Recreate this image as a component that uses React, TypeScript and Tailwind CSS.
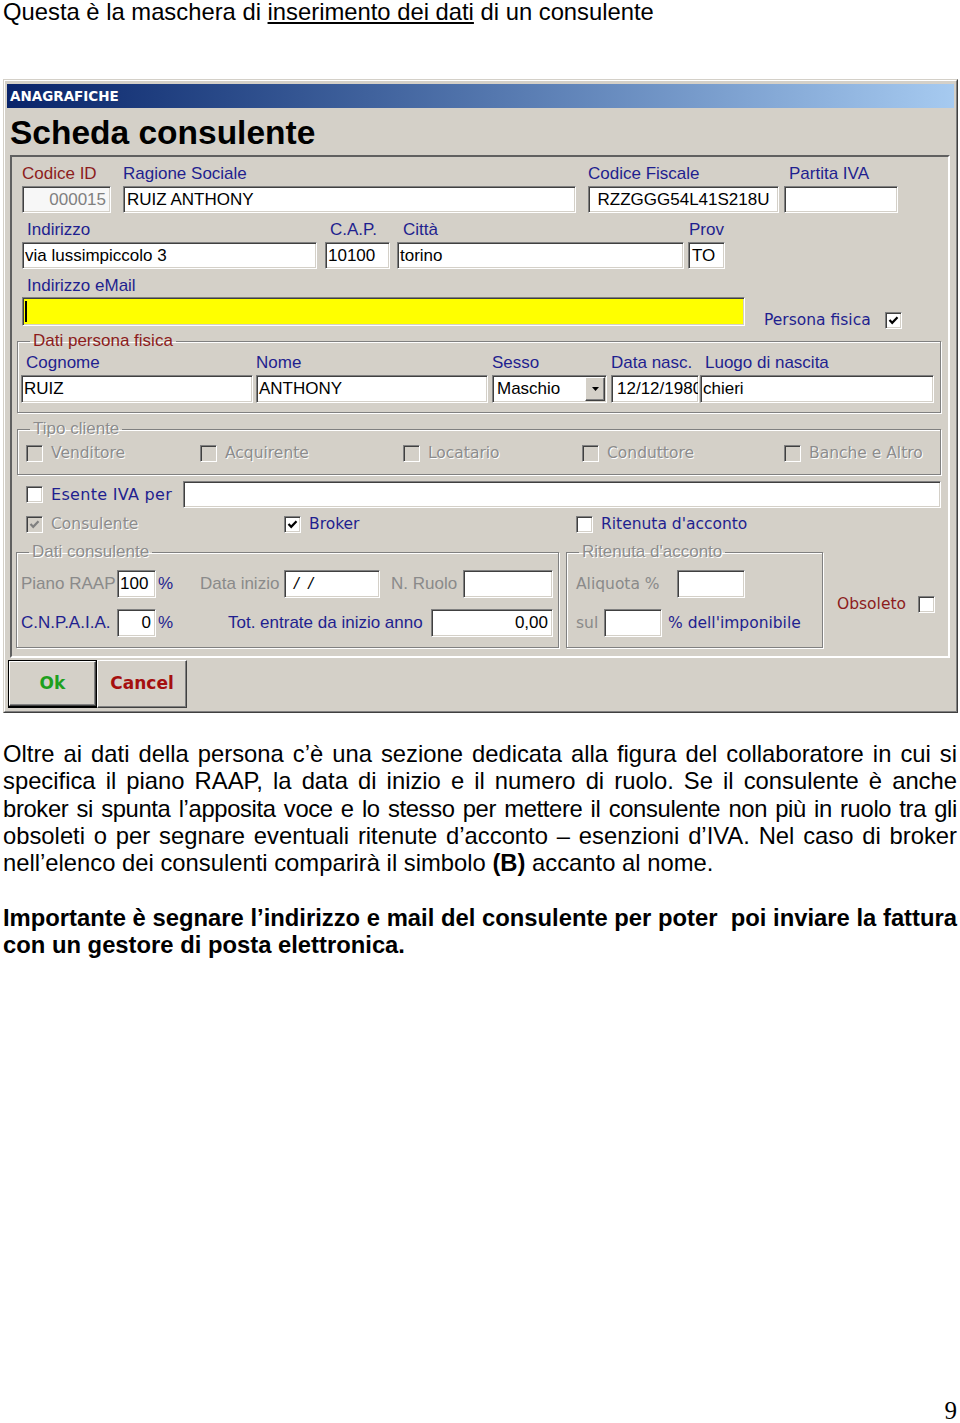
import React from 'react'

const ARIAL = "font-['Liberation_Sans',Arial,sans-serif]"
const TAHOMA = "font-['DejaVu_Sans',Verdana,sans-serif]"
const SUNKEN =
  'border border-t-[#808080] border-l-[#808080] border-r-white border-b-white shadow-[inset_1px_1px_0_#404040,inset_-1px_-1px_0_#d4d0c8]'
const RAISED =
  'border border-t-white border-l-white border-r-[#404040] border-b-[#404040] shadow-[inset_-1px_-1px_0_#808080]'
const LBL = `${ARIAL} text-[17px] leading-[20px] whitespace-nowrap`
const TLBL = `${TAHOMA} text-[15.5px] leading-[17px] whitespace-nowrap`
const NAVY = 'text-[#1f1f8f]'
const RED = 'text-[#8c1c1c]'
const GRAY = 'text-[#8a8a8a]'
const DIS = 'text-[#8c8c8c] [text-shadow:1px_1px_0_#ffffff]'

type Kids = { className?: string; children?: React.ReactNode }

// sunken edit box
function Field({ className = '', children }: Kids) {
  return (
    <div
      className={`${SUNKEN} ${ARIAL} flex items-center overflow-hidden whitespace-nowrap text-[17px] text-black ${className}`}
    >
      {children}
    </div>
  )
}

function Check({ checked = false, disabled = false }: { checked?: boolean; disabled?: boolean }) {
  return (
    <div
      className={`${SUNKEN} w-[17px] h-[17px] shrink-0 flex items-center justify-center ${
        disabled ? 'bg-[#d4d0c8]' : 'bg-white'
      }`}
    >
      {checked && (
        <svg viewBox="0 0 11 11" className="w-[11px] h-[11px]">
          <path
            d="M1.5 5 L4.2 7.8 L9.5 2.2"
            fill="none"
            stroke={disabled ? '#808080' : '#000000'}
            strokeWidth="2.2"
          />
        </svg>
      )}
    </div>
  )
}

function Col({ label, labelCls = '', className = '', children }: Kids & { label: string; labelCls?: string }) {
  return (
    <div className={`flex flex-col ${className}`}>
      <span className={`${LBL} ${labelCls}`}>{label}</span>
      {children}
    </div>
  )
}

function Group({ title, titleCls = '', className = '', children }: Kids & { title: string; titleCls?: string }) {
  return (
    <fieldset className={`border border-[#808080] shadow-[inset_1px_1px_0_#ffffff,1px_1px_0_#ffffff] ${className}`}>
      <legend className={`ml-[12px] px-[3px] ${LBL} ${titleCls}`}>{title}</legend>
      {children}
    </fieldset>
  )
}

function Opt({ label, className = '', checked, disabled, labelCls }: {
  label: string
  className?: string
  checked?: boolean
  disabled?: boolean
  labelCls: string
}) {
  return (
    <div className={`flex items-center gap-[8px] ${className}`}>
      <Check checked={checked} disabled={disabled} />
      <span className={`${TLBL} ${labelCls}`}>{label}</span>
    </div>
  )
}

export default function App() {
  return (
    <div className={`min-h-[1423px] w-[960px] bg-white flex flex-col text-black ${ARIAL}`}>
      <p className="pl-[3px] text-[23.8px] leading-[24px]">
        Questa è la maschera di <span className="underline">inserimento dei dati</span> di un consulente
      </p>

      {/* window */}
      <div className="mt-[55px] ml-[3px] w-[955px] border border-t-[#d4d0c8] border-l-[#d4d0c8] border-r-[#404040] border-b-[#404040]">
        <div className="border border-t-white border-l-white border-r-[#808080] border-b-[#808080] bg-[#d4d0c8] pt-[3px] px-[2px] pb-[3px]">
          <div className="h-[24px] flex items-center pl-[3px] bg-linear-to-r from-[#0a246a] to-[#a6caf0]">
            <span className={`${TAHOMA} text-[13.5px] font-bold text-white`}>ANAGRAFICHE</span>
          </div>

          <h1 className="mt-[9px] ml-[3px] text-[33.5px] leading-[32px] font-bold">Scheda consulente</h1>

          {/* main panel */}
          <div className="mt-[6px] ml-[3px] w-[940px] h-[503px] border-2 border-t-[#606060] border-l-[#606060] border-r-white border-b-white pt-[7px]">
            <div className="flex">
              <Col label="Codice ID" labelCls={RED} className="ml-[10px]">
                <Field className="mt-[2px] w-[89px] h-[27px] justify-end pr-[4px] bg-[#f7f7f7] text-[#808080]!">
                  000015
                </Field>
              </Col>
              <Col label="Ragione Sociale" labelCls={NAVY} className="ml-[12px]">
                <Field className="mt-[2px] w-[453px] h-[27px] bg-white pl-[3px]">RUIZ ANTHONY</Field>
              </Col>
              <Col label="Codice Fiscale" labelCls={NAVY} className="ml-[12px]">
                <Field className="mt-[2px] w-[191px] h-[27px] bg-white justify-center">RZZGGG54L41S218U</Field>
              </Col>
              <Col label="Partita IVA" labelCls={`${NAVY} pl-[5px]`} className="ml-[5px]">
                <Field className="mt-[2px] w-[114px] h-[27px] bg-white" />
              </Col>
            </div>

            <div className="flex mt-[7px]">
              <Col label="Indirizzo" labelCls={`${NAVY} pl-[5px]`} className="ml-[10px]">
                <Field className="mt-[2px] w-[295px] h-[27px] bg-white pl-[2px]">via lussimpiccolo 3</Field>
              </Col>
              <Col label="C.A.P." labelCls={`${NAVY} pl-[5px]`} className="ml-[8px]">
                <Field className="mt-[2px] w-[65px] h-[27px] bg-white pl-[2px]">10100</Field>
              </Col>
              <Col label="Città" labelCls={`${NAVY} pl-[6px]`} className="ml-[7px]">
                <Field className="mt-[2px] w-[287px] h-[27px] bg-white pl-[2px]">torino</Field>
              </Col>
              <Col label="Prov" labelCls={`${NAVY} pl-[1px]`} className="ml-[4px]">
                <Field className="mt-[2px] w-[37px] h-[27px] bg-white pl-[3px]">TO</Field>
              </Col>
            </div>

            <div className="flex items-end mt-[7px]">
              <Col label="Indirizzo eMail" labelCls={`${NAVY} pl-[5px]`} className="ml-[10px]">
                <Field className="mt-[1px] w-[723px] h-[29px] bg-[#ffff00] pl-[2px]">
                  <div className="w-[2px] h-[21px] bg-black" />
                </Field>
              </Col>
              <div className="ml-[19px] mb-[-3px] flex items-center">
                <span className={`${TLBL} ${NAVY} w-[121px]`}>Persona fisica</span>
                <Check checked />
              </div>
            </div>

            <Group title="Dati persona fisica" titleCls={RED} className="mt-[5px] ml-[5px] w-[924px] pt-[2px] pb-[9px]">
              <div className="flex">
                <Col label="Cognome" labelCls={`${NAVY} pl-[5px]`} className="ml-[3px]">
                  <Field className="mt-[2px] w-[232px] h-[28px] bg-white pl-[2px]">RUIZ</Field>
                </Col>
                <Col label="Nome" labelCls={NAVY} className="ml-[3px]">
                  <Field className="mt-[2px] w-[232px] h-[28px] bg-white pl-[2px]">ANTHONY</Field>
                </Col>
                <Col label="Sesso" labelCls={NAVY} className="ml-[4px]">
                  <Field className="mt-[2px] w-[115px] h-[28px] bg-white pl-[4px] pr-[1px]">
                    <span>Maschio</span>
                    <div className={`${RAISED} ml-auto w-[20px] h-[24px] bg-[#d4d0c8] flex items-center justify-center`}>
                      <svg viewBox="0 0 7 4" className="w-[7px] h-[4px]">
                        <path d="M0 0 H7 L3.5 4 Z" fill="#000000" />
                      </svg>
                    </div>
                  </Field>
                </Col>
                <Col label="Data nasc." labelCls={NAVY} className="ml-[4px] w-[88px]">
                  <Field className="mt-[2px] w-[88px] h-[28px] bg-white pl-[5px]">12/12/1980</Field>
                </Col>
                <Col label="Luogo di nascita" labelCls={`${NAVY} pl-[5px]`} className="ml-[1px]">
                  <Field className="mt-[2px] w-[234px] h-[28px] bg-white pl-[2px]">chieri</Field>
                </Col>
              </div>
            </Group>

            <Group title="Tipo cliente" titleCls={DIS} className="mt-[6px] ml-[5px] w-[924px] pt-[6px] pb-[12px]">
              <div className="flex items-center">
                <Opt label="Venditore" disabled labelCls={DIS} className="ml-[8px] w-[174px]" />
                <Opt label="Acquirente" disabled labelCls={DIS} className="w-[203px]" />
                <Opt label="Locatario" disabled labelCls={DIS} className="w-[179px]" />
                <Opt label="Conduttore" disabled labelCls={DIS} className="w-[202px]" />
                <Opt label="Banche e Altro" disabled labelCls={DIS} />
              </div>
            </Group>

            <div className="flex items-center mt-[6px]">
              <div className="ml-[14px]">
                <Check />
              </div>
              <span className={`${TAHOMA} text-[16px] leading-[17px] ${NAVY} ml-[8px] w-[132px] tracking-[0.3px]`}>
                Esente IVA per
              </span>
              <Field className="w-[758px] h-[27px] bg-white" />
            </div>

            <div className="flex items-center mt-[8px]">
              <Opt label="Consulente" checked disabled labelCls={DIS} className="ml-[14px] w-[258px]" />
              <Opt label="Broker" checked labelCls={NAVY} className="w-[292px]" />
              <Opt label="Ritenuta d'acconto" labelCls={NAVY} />
            </div>

            <div className="flex items-start mt-[9px]">
              <Group title="Dati consulente" titleCls={DIS} className="ml-[4px] w-[543px] pt-[8px] pb-[10px]">
                <div className="flex items-center h-[28px]">
                  <span className={`${LBL} ${GRAY} ml-[4px] w-[96px]`}>Piano RAAP</span>
                  <Field className="w-[39px] h-[28px] bg-white pl-[2px]">100</Field>
                  <span className={`${LBL} ${NAVY} w-[44px] pl-[2px]`}>%</span>
                  <span className={`${LBL} ${GRAY} w-[84px]`}>Data inizio</span>
                  <Field className="w-[96px] h-[28px] bg-white pl-[9px] italic">
                    <span className="whitespace-pre">/  /</span>
                  </Field>
                  <span className={`${LBL} ${GRAY} w-[83px] pl-[11px]`}>N. Ruolo</span>
                  <Field className="w-[90px] h-[28px] bg-white" />
                </div>
                <div className="flex items-center h-[28px] mt-[11px]">
                  <span className={`${LBL} ${NAVY} ml-[4px] w-[96px]`}>C.N.P.A.I.A.</span>
                  <Field className="w-[39px] h-[28px] bg-white justify-end pr-[4px]">0</Field>
                  <span className={`${LBL} ${NAVY} w-[72px] pl-[2px]`}>%</span>
                  <span className={`${LBL} ${NAVY} w-[203px]`}>Tot. entrate da inizio anno</span>
                  <Field className="w-[122px] h-[28px] bg-white justify-end pr-[4px]">0,00</Field>
                </div>
              </Group>

              <Group title="Ritenuta d'acconto" titleCls={DIS} className="ml-[7px] w-[257px] pt-[8px] pb-[10px]">
                <div className="flex items-center h-[28px]">
                  <span className={`${TLBL} ${GRAY} ml-[9px] w-[101px]`}>Aliquota %</span>
                  <Field className="w-[68px] h-[28px] bg-white" />
                </div>
                <div className="flex items-center h-[28px] mt-[11px]">
                  <span className={`${TLBL} ${GRAY} ml-[9px] w-[28px]`}>sul</span>
                  <Field className="w-[58px] h-[28px] bg-white" />
                  <span className={`${TLBL} ${NAVY} ml-[6px]`}>% dell'imponibile</span>
                </div>
              </Group>

              <div className="ml-[14px] mt-[54px] flex items-center">
                <span className={`${TLBL} ${RED} w-[81px]`}>Obsoleto</span>
                <Check />
              </div>
            </div>
          </div>

          {/* buttons */}
          <div className="flex mt-[2px] ml-[1px]">
            <div className="w-[89px] h-[48px] border border-black border-b-2">
              <div className={`${RAISED} h-full flex items-center justify-center`}>
                <span className={`${TAHOMA} text-[17px] font-bold text-[#1ea01e]`}>Ok</span>
              </div>
            </div>
            <div className={`${RAISED} w-[90px] h-[48px] flex items-center justify-center`}>
              <span className={`${TAHOMA} text-[17px] font-bold text-[#a50f0f]`}>Cancel</span>
            </div>
          </div>
        </div>
      </div>

      {/* description */}
      <div className="mt-[27px] px-[3px] text-[23.8px] leading-[27.3px]">
        <p className="text-justify [text-align-last:justify]">
          Oltre ai dati della persona c’è una sezione dedicata alla figura del collaboratore in cui si
        </p>
        <p className="text-justify [text-align-last:justify]">
          specifica il piano RAAP, la data di inizio e il numero di ruolo. Se il consulente è anche
        </p>
        <p className="text-justify [text-align-last:justify] whitespace-nowrap tracking-[-0.35px]">
          broker si spunta l’apposita voce e lo stesso per mettere il consulente non più in ruolo tra gli
        </p>
        <p className="text-justify [text-align-last:justify]">
          obsoleti o per segnare eventuali ritenute d’acconto – esenzioni d’IVA. Nel caso di broker
        </p>
        <p>
          nell’elenco dei consulenti comparirà il simbolo <b>(B)</b> accanto al nome.
        </p>

        <p className="mt-[27.3px] font-bold text-justify [text-align-last:justify]">
          Importante è segnare l’indirizzo e mail del consulente per poter&nbsp; poi inviare la fattura
        </p>
        <p className="font-bold">con un gestore di posta elettronica.</p>
      </div>

      <div className="mt-auto pr-[3px] text-right font-['Liberation_Serif',serif] text-[25px] leading-[25px]">9</div>
    </div>
  )
}
